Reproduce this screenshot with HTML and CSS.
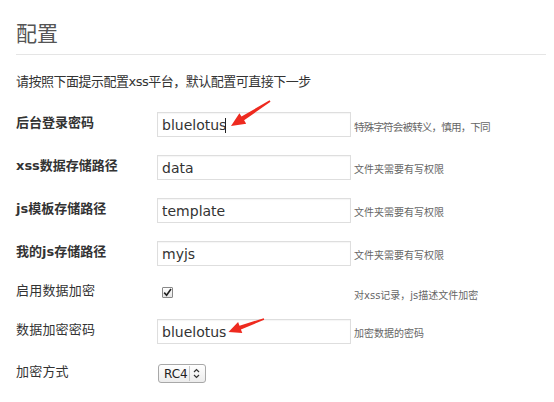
FILE: index.html
```html
<!DOCTYPE html>
<html lang="zh">
<head>
<meta charset="utf-8">
<title>配置</title>
<link rel="stylesheet" href="styles.css">
</head>
<body>
<div class="page">
  <h1 class="title">配置</h1>
  <p class="intro">请按照下面提示配置xss平台，默认配置可直接下一步</p>
  <form class="form">
    <div class="row">
      <label class="label">后台登录密码</label>
      <div class="field"><input class="input" type="text" value="bluelotus"><span class="caret"></span></div>
      <span class="help help-tight">特殊字符会被转义，慎用，下同</span>
    </div>
    <div class="row">
      <label class="label">xss数据存储路径</label>
      <div class="field"><input class="input" type="text" value="data"></div>
      <span class="help">文件夹需要有写权限</span>
    </div>
    <div class="row">
      <label class="label">js模板存储路径</label>
      <div class="field"><input class="input" type="text" value="template"></div>
      <span class="help">文件夹需要有写权限</span>
    </div>
    <div class="row">
      <label class="label">我的js存储路径</label>
      <div class="field"><input class="input" type="text" value="myjs"></div>
      <span class="help">文件夹需要有写权限</span>
    </div>
    <div class="row row-check">
      <label class="label label-plain">启用数据加密</label>
      <div class="field">
        <span class="checkbox"><svg width="9" height="9" viewBox="0 0 9 9"><path d="M1.2 4.6 L3.6 7.2 L8 1" fill="none" stroke="#222" stroke-width="1.6"/></svg></span>
      </div>
      <span class="help help-check">对xss记录，js描述文件加密</span>
    </div>
    <div class="row">
      <label class="label label-plain">数据加密密码</label>
      <div class="field"><input class="input" type="text" value="bluelotus"></div>
      <span class="help">加密数据的密码</span>
    </div>
    <div class="row row-select">
      <label class="label label-plain">加密方式</label>
      <div class="field">
        <div class="select"><span class="select-text">RC4</span><span class="select-sep"></span><svg class="select-arrows" width="7" height="11" viewBox="0 0 7 11"><path d="M1 4 L3.5 1.5 L6 4 M1 7 L3.5 9.5 L6 7" fill="none" stroke="#333" stroke-width="1.2"/></svg></div>
      </div>
    </div>
  </form>
</div>
<svg class="annotations" width="554" height="402" viewBox="0 0 554 402">
  <polygon fill="#ee2a1f" points="269.6,100.2 241.5,116.6 239.4,113.2 231,126 246.2,123.7 244.1,120.2 270.5,101.8"/>
  <polygon fill="#ee2a1f" points="263.8,318.2 239.5,325.7 238.1,322.1 228.5,332 242.3,333.1 240.9,329.5 264.2,319.8"/>
</svg>
</body>
</html>
```

FILE: styles.css
```css
html, body {
  margin: 0;
  padding: 0;
  background: #fff;
}
body {
  position: relative;
  width: 554px;
  height: 402px;
  overflow: hidden;
  font-family: "DejaVu Sans", "Noto Sans CJK SC", sans-serif;
  color: #333;
}
.page {
  padding: 0 8px 0 16px;
}
.title {
  margin: 0;
  padding: 19px 0 5px;
  font-size: 21px;
  line-height: 30px;
  font-weight: normal;
  color: #555;
  border-bottom: 1px solid #e5e5e5;
}
.intro {
  margin: 17px 0 0;
  font-size: 13px;
  line-height: 20px;
  letter-spacing: -0.5px;
  color: #333;
}
.form {
  margin-top: 20px;
}
.row {
  display: flex;
  align-items: center;
  height: 25px;
  margin-bottom: 18px;
}
.row-check {
  height: 17px;
}
.row-select {
  height: 23px;
}
.label {
  width: 141px;
  flex: none;
  font-size: 13px;
  line-height: 17px;
  font-weight: bold;
  color: #333;
  padding-bottom: 4px;
}
.label-plain {
  font-weight: normal;
  letter-spacing: 0.2px;
}
.field {
  position: relative;
  width: 194px;
  flex: none;
  display: flex;
  align-items: center;
}
.input {
  box-sizing: border-box;
  width: 194px;
  height: 25px;
  margin: 0;
  padding: 0 4px;
  border: 1px solid #dedede;
  border-radius: 0;
  box-shadow: inset 0 1px 1px rgba(0,0,0,0.04);
  font-family: "DejaVu Sans", "Noto Sans CJK SC", sans-serif;
  font-size: 14px;
  color: #333;
  background: #fff;
  outline: none;
}
.caret {
  position: absolute;
  left: 68px;
  top: 6px;
  width: 1px;
  height: 15px;
  background: #222;
}
.help {
  margin-left: 3px;
  padding-top: 4px;
  font-size: 10px;
  line-height: 14px;
  color: #666;
  white-space: nowrap;
}
.help-tight {
  font-size: 10.6px;
  letter-spacing: -0.9px;
}
.help-check {
  padding-top: 6px;
}
.checkbox {
  box-sizing: border-box;
  width: 11px;
  height: 11px;
  margin-left: 5px;
  border: 1px solid #888;
  border-radius: 1px;
  background: linear-gradient(#fff, #e6e6e6);
  display: flex;
  align-items: center;
  justify-content: center;
}
.checkbox svg {
  display: block;
}
.select {
  box-sizing: border-box;
  height: 19px;
  width: 48px;
  margin-left: 1px;
  border: 1px solid #a8a8a8;
  border-radius: 3px;
  background: linear-gradient(#ffffff, #ececec);
  display: flex;
  align-items: center;
  font-size: 12px;
  color: #222;
}
.select-text {
  padding-left: 5px;
  width: 25px;
}
.select-sep {
  width: 1px;
  height: 15px;
  background: #c8c8c8;
}
.select-arrows {
  margin-left: 3px;
}
.annotations {
  position: absolute;
  left: 0;
  top: 0;
  pointer-events: none;
}
```
